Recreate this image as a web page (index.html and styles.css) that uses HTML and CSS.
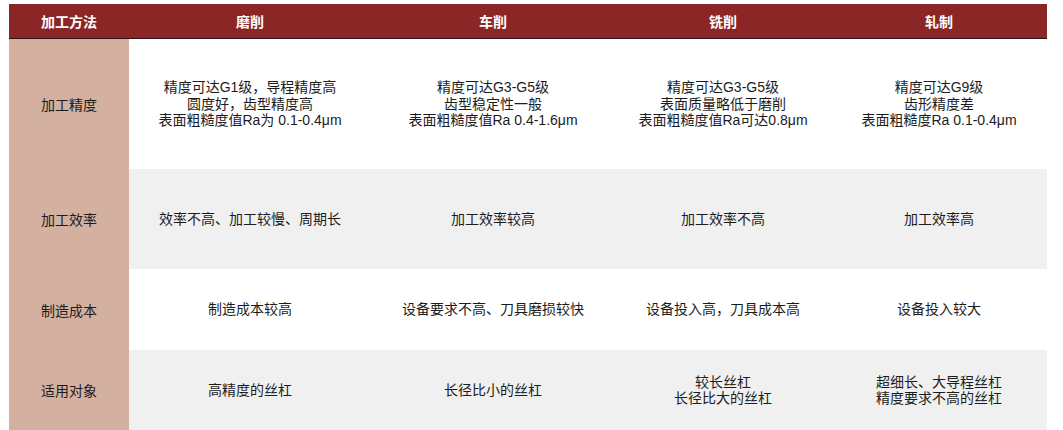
FILE: index.html
```html
<!DOCTYPE html>
<html lang="zh">
<head>
<meta charset="utf-8">
<link rel="stylesheet" href="styles.css">
</head>
<body>
<div class="table">
  <div class="hd first">加工方法</div>
  <div class="hd">磨削</div>
  <div class="hd">车削</div>
  <div class="hd">铣削</div>
  <div class="hd">轧制</div>

  <div class="rh r1">加工精度</div>
  <div class="c r1"><span>精度可达G1级，导程精度高</span><span>圆度好，齿型精度高</span><span>表面粗糙度值Ra为 0.1-0.4μm</span></div>
  <div class="c r1"><span>精度可达G3-G5级</span><span>齿型稳定性一般</span><span>表面粗糙度值Ra 0.4-1.6μm</span></div>
  <div class="c r1"><span>精度可达G3-G5级</span><span>表面质量略低于磨削</span><span>表面粗糙度值Ra可达0.8μm</span></div>
  <div class="c r1"><span>精度可达G9级</span><span>齿形精度差</span><span>表面粗糙度Ra 0.1-0.4μm</span></div>

  <div class="rh r2">加工效率</div>
  <div class="c r2 gray"><span>效率不高、加工较慢、周期长</span></div>
  <div class="c r2 gray"><span>加工效率较高</span></div>
  <div class="c r2 gray"><span>加工效率不高</span></div>
  <div class="c r2 gray"><span>加工效率高</span></div>

  <div class="rh r3">制造成本</div>
  <div class="c r3"><span>制造成本较高</span></div>
  <div class="c r3"><span>设备要求不高、刀具磨损较快</span></div>
  <div class="c r3"><span>设备投入高，刀具成本高</span></div>
  <div class="c r3"><span>设备投入较大</span></div>

  <div class="rh r4">适用对象</div>
  <div class="c r4 gray"><span>高精度的丝杠</span></div>
  <div class="c r4 gray"><span>长径比小的丝杠</span></div>
  <div class="c r4 gray"><span>较长丝杠</span><span>长径比大的丝杠</span></div>
  <div class="c r4 gray"><span>超细长、大导程丝杠</span><span>精度要求不高的丝杠</span></div>
</div>
</body>
</html>
```

FILE: styles.css
```css
html, body {
  margin: 0;
  padding: 0;
  background: #ffffff;
}
body {
  font-family: "Liberation Sans", "Noto Sans CJK SC", sans-serif;
  font-size: 14px;
  color: #1c1c1c;
}
.table {
  margin: 4px 0 0 9px;
  width: 1038px;
  display: grid;
  grid-template-columns: 120px 242px 244px 216px 216px;
  grid-template-rows: 35px 130px 100px 81px 80px;
}
.hd {
  background: #8b2626;
  color: #ffffff;
  font-weight: bold;
  display: flex;
  align-items: center;
  justify-content: center;
  border-bottom: 1px solid #2b1515;
  padding-bottom: 1px;
}
.rh {
  background: #d3b0a0;
  display: flex;
  align-items: center;
  justify-content: center;
}
.c {
  display: flex;
  flex-direction: column;
  align-items: center;
  justify-content: center;
  text-align: center;
}
.c span {
  display: block;
  height: 16.5px;
  line-height: 16.5px;
  white-space: nowrap;
}
.gray {
  background: #f0f0f0;
}
```
